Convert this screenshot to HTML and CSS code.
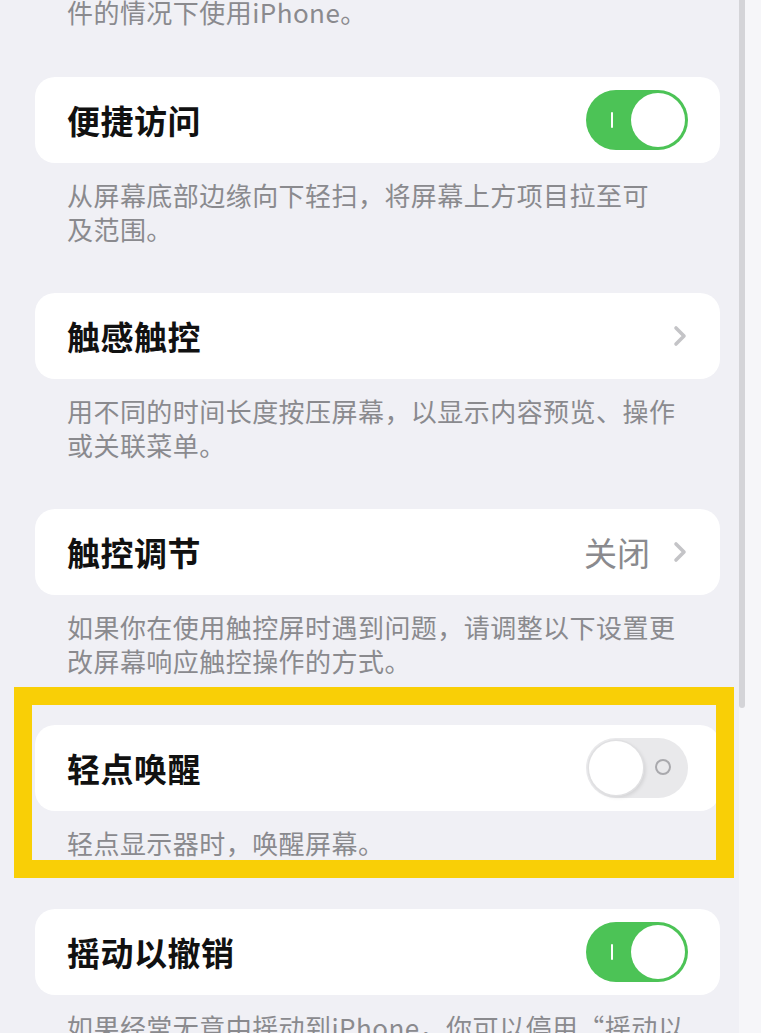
FILE: index.html
```html
<!DOCTYPE html>
<html lang="zh-CN">
<head>
<meta charset="utf-8">
<title>触控</title>
<link rel="stylesheet" href="styles.css">
</head>
<body>
<div class="page">
  <main class="content">
    <p class="footer top-note">件的情况下使用iPhone。</p>

    <section class="group">
      <div class="card">
        <span class="title">便捷访问</span>
        <span class="toggle on"><span class="on-mark"></span><span class="knob"></span></span>
      </div>
      <p class="footer">从屏幕底部边缘向下轻扫，将屏幕上方项目拉至可<br>及范围。</p>
    </section>

    <section class="group">
      <div class="card">
        <span class="title">触感触控</span>
        <span class="accessory">
          <svg class="chevron" viewBox="0 0 16 24" width="16" height="24"><path d="M4 4 L12 12 L4 20" fill="none" stroke="#c4c4c7" stroke-width="3.6" stroke-linecap="round" stroke-linejoin="round"/></svg>
        </span>
      </div>
      <p class="footer">用不同的时间长度按压屏幕，以显示内容预览、操作<br>或关联菜单。</p>
    </section>

    <section class="group">
      <div class="card">
        <span class="title">触控调节</span>
        <span class="accessory">
          <span class="value">关闭</span>
          <svg class="chevron" viewBox="0 0 16 24" width="16" height="24"><path d="M4 4 L12 12 L4 20" fill="none" stroke="#c4c4c7" stroke-width="3.6" stroke-linecap="round" stroke-linejoin="round"/></svg>
        </span>
      </div>
      <p class="footer">如果你在使用触控屏时遇到问题，请调整以下设置更<br>改屏幕响应触控操作的方式。</p>
    </section>

    <section class="group highlighted">
      <div class="card">
        <span class="title">轻点唤醒</span>
        <span class="toggle off"><span class="knob"></span><span class="off-mark"></span></span>
      </div>
      <p class="footer">轻点显示器时，唤醒屏幕。</p>
    </section>

    <section class="group">
      <div class="card">
        <span class="title">摇动以撤销</span>
        <span class="toggle on"><span class="on-mark"></span><span class="knob"></span></span>
      </div>
      <p class="footer">如果经常无意中摇动到iPhone，你可以停用“摇动以</p>
    </section>
  </main>
  <aside class="gutter"><span class="scroll-indicator"></span></aside>
</div>
</body>
</html>
```
FILE: styles.css
```css
html, body {
  margin: 0;
  padding: 0;
  height: 100%;
  overflow: hidden;
}
body {
  background: #f0f0f5;
  font-family: "Noto Sans CJK SC", "Noto Sans", sans-serif;
}
.page {
  display: flex;
  height: 1033px;
  overflow: hidden;
}
.content {
  width: 739px;
  padding-left: 35px;
  box-sizing: border-box;
  margin-top: -5px;
}
.gutter {
  flex: 1;
  display: flex;
  background: #f6f6f9;
}
.scroll-indicator {
  width: 6px;
  height: 708px;
  background: #d4d4d8;
  border-radius: 0 0 3px 3px;
}
.footer {
  margin: 0;
  padding: 0 0 0 32px;
  font-size: 26px;
  line-height: 34px;
  color: #8a8a8e;
  letter-spacing: 0.45px;
}
.top-note {
  margin-bottom: 48px;
}
.group {
  margin-bottom: 47px;
  position: relative;
}
.group.highlighted {
  margin-bottom: 49px;
}
.group .footer {
  padding-top: 15px;
}
.card {
  width: 685px;
  height: 86px;
  box-sizing: border-box;
  background: #ffffff;
  border-radius: 20px;
  display: flex;
  align-items: center;
  justify-content: space-between;
  padding: 0 32px;
}
.title {
  font-size: 33px;
  font-weight: 700;
  color: #111;
  letter-spacing: 0.5px;
}
.accessory {
  display: flex;
  align-items: center;
  gap: 22px;
}
.value {
  font-size: 33px;
  color: #8a8a8e;
}
.chevron {
  display: block;
}
.toggle {
  position: relative;
  width: 102px;
  height: 60px;
  border-radius: 30px;
  box-sizing: border-box;
  display: block;
}
.toggle.on {
  background: #4cc356;
}
.toggle.off {
  background: #e9e9eb;
}
.knob {
  position: absolute;
  top: 3px;
  width: 54px;
  height: 54px;
  border-radius: 50%;
  background: #fff;
}
.toggle.on .knob {
  right: 3px;
}
.toggle.off .knob {
  left: 3px;
  box-shadow: 0 0 0 1.5px #e0e0e2, 2px 2px 4px rgba(0,0,0,0.12);
}
.on-mark {
  position: absolute;
  left: 25px;
  top: 22px;
  width: 2px;
  height: 16px;
  background: #ffffff;
  border-radius: 1px;
}
.off-mark {
  position: absolute;
  right: 17px;
  top: 21px;
  width: 16px;
  height: 16px;
  border: 2px solid #a9a9ad;
  border-radius: 50%;
  box-sizing: border-box;
}
.highlighted::after {
  content: "";
  position: absolute;
  left: -21px;
  top: -38px;
  width: 720px;
  height: 191px;
  border: 18px solid #f9cf06;
  box-sizing: border-box;
  pointer-events: none;
}
```
